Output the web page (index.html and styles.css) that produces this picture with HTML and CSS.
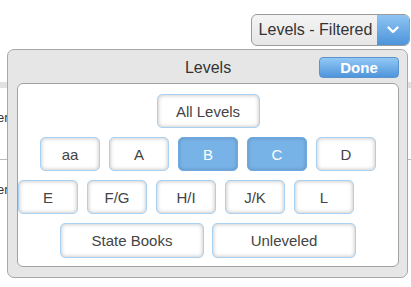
FILE: index.html
```html
<!DOCTYPE html>
<html>
<head>
    <meta charset="utf-8">
    <title>Levels</title>
    <link rel="stylesheet" href="styles.css">
</head>
<body>
    <div class="toolbar">
        <div class="select">
            <span class="select-label">Levels - Filtered</span>
            <span class="select-arrow">
                <svg width="12" height="8" viewBox="0 0 12 8"><path d="M1.5 1.5 L6 6 L10.5 1.5" fill="none" stroke="#fff" stroke-width="2.4" stroke-linecap="round" stroke-linejoin="round"/></svg>
            </span>
        </div>
    </div>
    <div class="list">
        <div class="list-head"></div>
        <div class="list-row">er</div>
        <div class="list-row">er</div>
    </div>

    <div class="pop">
        <div class="pop-head">
            <span></span>
            <h3>Levels</h3>
            <button type="button" class="done">Done</button>
        </div>
        <div class="pop-body">
            <div class="row">
                <button type="button" class="lv wide">All Levels</button>
            </div>
            <div class="row">
                <button type="button" class="lv">aa</button>
                <button type="button" class="lv">A</button>
                <button type="button" class="lv on">B</button>
                <button type="button" class="lv on">C</button>
                <button type="button" class="lv">D</button>
            </div>
            <div class="row left">
                <button type="button" class="lv">E</button>
                <button type="button" class="lv">F/G</button>
                <button type="button" class="lv">H/I</button>
                <button type="button" class="lv">J/K</button>
                <button type="button" class="lv">L</button>
            </div>
            <div class="row tight">
                <button type="button" class="lv big">State Books</button>
                <button type="button" class="lv big">Unleveled</button>
            </div>
        </div>
    </div>
</body>
</html>
```

FILE: styles.css
```css
body { margin: 0; padding: 0; background: #fff; font-family: "Liberation Sans", Arial, sans-serif; color: #333; position: relative; height: 287px; overflow: hidden; }

.toolbar { display: flex; justify-content: flex-end; padding: 14px 1px 0 0; }
.select { display: flex; width: 159px; height: 32px; box-sizing: border-box; border: 1px solid #9a9a9a; border-radius: 6px; overflow: hidden; background: linear-gradient(#f4f4f4, #e6e6e6); }
.select-label { flex: 1; display: flex; align-items: center; justify-content: center; font-size: 16px; color: #333; padding-left: 2px; }
.select-arrow { width: 32px; display: flex; align-items: center; justify-content: center; background: linear-gradient(#8ec4f2, #4d94dc); }

.list { margin-top: 36px; }
.list-head { height: 6px; background: #e2e2e2; }
.list-row { height: 71px; line-height: 60px; font-size: 13px; color: #333; border-bottom: 1px solid #bbb; text-indent: -3px; }
.list-row:last-child { border-bottom: 0; }

.pop { position: absolute; left: 7px; top: 49px; width: 401px; height: 229px; box-sizing: border-box; background: #e6e6e6; border: 1px solid #a8a8a8; border-radius: 7px; padding: 0 8px 10px 9px; display: flex; flex-direction: column; }
.pop-head { height: 33px; display: grid; grid-template-columns: 1fr auto 1fr; align-items: center; }
.pop-head h3 { margin: 0; font-size: 16px; font-weight: normal; color: #333; padding-top: 2px; }
.done { justify-self: end; width: 80px; height: 21px; margin-top: 1px; border: 1px solid #5b93cf; border-radius: 4px; background: linear-gradient(#92c8f5, #4f95dc); color: #fff; font-family: "Liberation Sans", Arial, sans-serif; font-weight: bold; font-size: 15px; padding: 0; }

.pop-body { flex: 1; background: #fff; border: 1px solid #a2a2a2; border-radius: 6px; padding: 10px 0 0 0; display: flex; flex-direction: column; gap: 9px; }
.row { display: flex; justify-content: center; gap: 9px; }
.row.left { justify-content: flex-start; }
.row.tight { gap: 8px; }

.lv { width: 60px; height: 34px; box-sizing: border-box; padding: 0; border: 1px solid #a9d1f3; border-radius: 5px; background: #fff; box-shadow: inset 0 0 4px rgba(0, 0, 0, 0.28); font-family: "Liberation Sans", Arial, sans-serif; font-size: 15px; color: #444; }
.lv.wide { width: 103px; }
.lv.big { width: 144px; height: 35px; }
.lv.on { background: #78b3e8; border-color: #6ea9df; box-shadow: inset 0 0 4px rgba(0, 0, 0, 0.2); color: #fff; }
```
